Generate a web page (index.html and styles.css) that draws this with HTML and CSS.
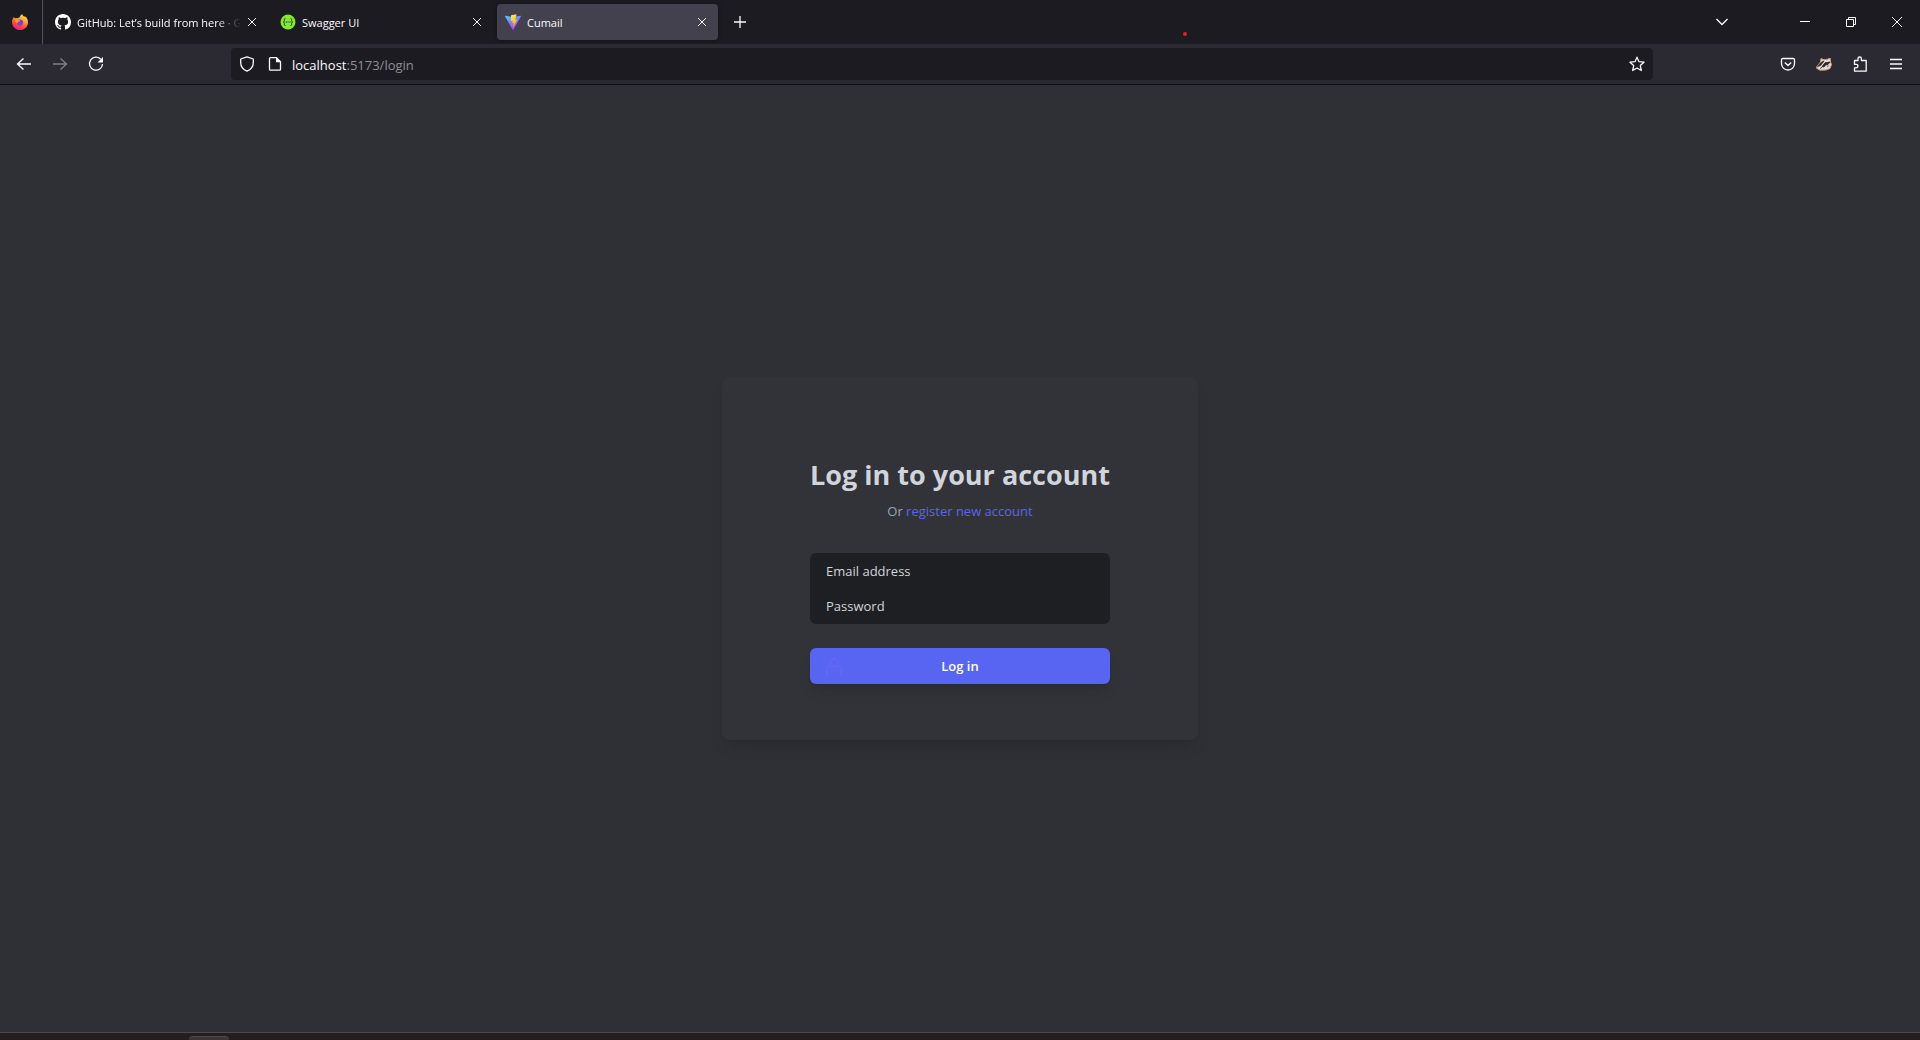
FILE: index.html
```html
<!DOCTYPE html>
<html lang="en">
<head>
<meta charset="utf-8">
<meta name="viewport" content="width=device-width, initial-scale=1">
<title>Cumail</title>
<link rel="stylesheet" href="styles.css">
</head>
<body>
<div class="screen">
  <header class="tabbar">
    <button class="firefox" aria-label="Firefox View">
      <svg width="16" height="16" viewBox="0 0 16 16">
        <defs>
          <linearGradient id="fx" x1="0.8" y1="0" x2="0.3" y2="1"><stop offset="0" stop-color="#fff04a"/><stop offset=".35" stop-color="#ffa82b"/><stop offset=".7" stop-color="#ff4a36"/><stop offset="1" stop-color="#f0118a"/></linearGradient>
        </defs>
        <path d="M10.2 0c.3 1.4 1.2 2 2.2 3 .2-.5.2-.8.2-1.100C15 3.200 16 5.700 16 8.200 16 12.600 12.500 16 8.100 16S0 12.600 0 8.200C0 6 .8 4.200 2 2.800c.2.700.5 1.200.9 1.500.8-.3 1.700-.3 2.400 0C6 3.700 6.900 3.500 7.500 3.500 8 2 9 .800 10.200 0z" fill="url(#fx)"/>
        <circle cx="8" cy="8.600" r="3.100" fill="#7a3fe0"/>
        <path d="M3.200 5.500c1.500-.6 3 .2 4.500.7 1 .4 0 1.300-1.200 1.500-.8.200-.9.900-.7 1.600C3.800 9.200 3 7.500 3.200 5.500z" fill="#ff9a1f"/>
      </svg>
    </button>
    <nav class="tabs" aria-label="Tabs">
      <div class="tab">
        <svg class="favicon" width="16" height="16" viewBox="0 0 16 16" fill="#fff"><path d="M8 0C3.580 0 0 3.580 0 8c0 3.540 2.290 6.530 5.470 7.590.4.070.55-.17.55-.38 0-.19-.01-.82-.01-1.490-2.010.37-2.530-.49-2.690-.94-.09-.23-.48-.94-.82-1.130-.28-.15-.68-.52-.01-.53.630-.01 1.080.58 1.230.82.720 1.210 1.870.87 2.330.66.070-.52.280-.87.510-1.070-1.780-.2-3.640-.89-3.640-3.950 0-.87.310-1.590.82-2.150-.08-.2-.36-1.020.08-2.120 0 0 .67-.21 2.200.82.640-.18 1.320-.27 2-.27s1.360.09 2 .27c1.530-1.040 2.200-.82 2.200-.82.440 1.100.160 1.920.080 2.120.510.560.820 1.270.820 2.150 0 3.070-1.870 3.750-3.650 3.950.290.250.540.730.540 1.480 0 1.070-.01 1.930-.01 2.200 0 .210.150.460.550.380A8.010 8.010 0 0 0 16 8c0-4.420-3.580-8-8-8z"/></svg>
        <span class="tab-title tab-title-faded">GitHub: Let’s build from here · G</span>
        <button class="tab-close" aria-label="Close tab"><svg width="10" height="10" viewBox="0 0 10 10"><path d="M1 1l8 8M9 1L1 9"/></svg></button>
      </div>
      <div class="tab">
        <svg class="favicon" width="16" height="16" viewBox="0 0 16 16"><circle cx="8" cy="8" r="7.500" fill="#85ea2d"/><g fill="none" stroke="#173647"><path d="M5.500 4.500c-1.500 0-1 1-1.100 2 0 .9-.4 1.500-1.100 1.500.7 0 1.100.6 1.100 1.500 0 1-.4 2 1.100 2M10.500 4.500c1.500 0 1 1 1.100 2 0 .9.4 1.500 1.100 1.500-.7 0-1.100.6-1.100 1.500 0 1 .4 2-1.100 2"/><path d="M5.700 8h4.800" stroke-dasharray="1.200 .6"/></g></svg>
        <span class="tab-title">Swagger UI</span>
        <button class="tab-close" aria-label="Close tab"><svg width="10" height="10" viewBox="0 0 10 10"><path d="M1 1l8 8M9 1L1 9"/></svg></button>
      </div>
      <div class="tab tab-active">
        <svg class="favicon" width="16" height="16" viewBox="0 0 16 16">
          <defs>
            <linearGradient id="va" x1="0" y1="0" x2=".6" y2="1"><stop offset="0" stop-color="#41d1ff"/><stop offset="1" stop-color="#bd34fe"/></linearGradient>
            <linearGradient id="vb" x1=".4" y1="0" x2=".6" y2="1"><stop offset="0" stop-color="#ffea83"/><stop offset=".2" stop-color="#ffdd35"/><stop offset="1" stop-color="#ffa800"/></linearGradient>
          </defs>
          <path d="M15.900 2.400L8.400 15.700c-.2.300-.6.300-.7 0L.1 2.400c-.2-.3.100-.7.500-.6L8 3.100l7.400-1.300c.4-.1.700.3.500.6z" fill="url(#va)"/>
          <path d="M11.600.2L6.100 1.300l-.3 5.800 1.900-.2-.4 2.400 1.500-.4-.7 4c0 .3.300.2.400 0l3.700-7.500-2 .3z" fill="url(#vb)"/>
        </svg>
        <span class="tab-title">Cumail</span>
        <button class="tab-close" aria-label="Close tab"><svg width="10" height="10" viewBox="0 0 10 10"><path d="M1 1l8 8M9 1L1 9"/></svg></button>
      </div>
      <button class="new-tab" aria-label="Open a new tab"><svg width="12" height="12" viewBox="0 0 12 12"><path d="M6 0v12M0 6h12" stroke="#fbfbfe" stroke-width="1.300"/></svg></button>
    </nav>
    <button class="all-tabs" aria-label="List all tabs"><svg width="14" height="10" viewBox="0 0 14 10"><path d="M1.500 2L7 7.500 12.500 2" stroke="#fbfbfe" stroke-width="1.300" fill="none"/></svg></button>
    <div class="window-buttons">
      <button aria-label="Minimize"><svg width="10" height="10" viewBox="0 0 10 10"><path d="M0 4.500h10"/></svg></button>
      <button aria-label="Restore"><svg width="10" height="10" viewBox="0 0 10 10"><path d="M.5 2.500h7v7h-7zM2.500 2.500v-2h7v7h-2"/></svg></button>
      <button aria-label="Close"><svg width="10" height="10" viewBox="0 0 10 10"><path d="M0 0l10 10M10 0L0 10"/></svg></button>
    </div>
    <span class="red-dot"></span>
  </header>

  <div class="toolbar">
    <button class="tool" aria-label="Back"><svg width="16" height="16" viewBox="0 0 16 16"><path d="M15 8H1.500M7.500 2.500L1.500 8l6 5.500"/></svg></button>
    <button class="tool" aria-label="Forward" disabled><svg width="16" height="16" viewBox="0 0 16 16"><path d="M1 8h13.500M8.500 2.500l6 5.500-6 5.500"/></svg></button>
    <button class="tool" aria-label="Reload"><svg width="16" height="16" viewBox="0 0 16 16"><path d="M12.800 3.300A6.500 6.500 0 1 0 14.500 8"/><path d="M15 1v5.500H9.500z" fill="#fbfbfe" stroke="none"/></svg></button>
    <div class="spring"></div>
    <div class="urlbar">
      <span class="site-icons">
        <svg width="16" height="16" viewBox="0 0 16 16"><path d="M8 .8L14.300 3v3.500c0 4-2.600 7.200-6.300 8.700C4.300 13.700 1.700 10.500 1.700 6.500V3z" stroke-linejoin="round"/></svg>
        <svg width="16" height="16" viewBox="0 0 16 16"><path d="M3.500 1.700h6l4 4v7.500a1 1 0 0 1-1 1h-9a1 1 0 0 1-1-1V2.700a1 1 0 0 1 1-1z"/><path d="M9 1l5.200 5.200H9z" fill="#fbfbfe" stroke="none"/></svg>
      </span>
      <span class="url">localhost<span class="url-dim">:5173/login</span></span>
      <svg width="16" height="16" viewBox="0 0 16 16"><path d="M8 1.200l2 4.500 5 .5-3.700 3.400 1 4.900L8 12l-4.300 2.500 1-4.900L1 6.200l5-.5z" stroke-linejoin="round"/></svg>
    </div>
    <div class="spring"></div>
    <button class="tool" aria-label="Save to Pocket"><svg width="16" height="16" viewBox="0 0 16 16"><path d="M2.700 2.500h10.600c.7 0 1.200.5 1.200 1.200V7.500a6.500 6.500 0 0 1-13 0V3.700c0-.7.500-1.200 1.200-1.200zM4.800 6.500L8 9.500l3.200-3" stroke-linejoin="round"/></svg></button>
    <button class="tool" aria-label="Privacy Badger"><svg width="16" height="16" viewBox="0 0 16 16"><path d="M.8 10.500L4.500 6 5 2.500l3 1.300 3.500-.6 2.700-1 .4 4 .9 2.300-1.500 4-4 1.500-6 .2-3.200-1.700z" fill="#dedcd8" stroke="#d9996c" stroke-width="1"/><path d="M1.500 10.500L5 6.500l3-1.500-3.500 4.500zM6 10.500l3-3.700 4.800-.8-1.800 2.500-2.500.5-1.500 2zM4 12.500l2-1.300M11 10.500l1.500-.7" fill="#292831" stroke="#292831" stroke-width=".8"/></svg></button>
    <button class="tool" aria-label="Extensions"><svg width="16" height="16" viewBox="0 0 16 16"><path d="M2.500 4.500H6V2.700a1.700 1.700 0 0 1 3.400 0v1.800h4.800v10.700H2.500v-3.400h1.800a1.700 1.700 0 0 0 0-3.400H2.500z" stroke-linejoin="round"/></svg></button>
    <button class="tool" aria-label="Application menu"><svg width="16" height="16" viewBox="0 0 16 16"><path d="M2 3.500h12M2 8h12M2 12.500h12"/></svg></button>
  </div>

  <main class="page">
    <section class="card">
      <h1>Log in to your account</h1>
      <p class="subtitle">Or <a href="#register">register new account</a></p>
      <form>
        <div class="fields">
          <input type="email" aria-label="Email address" placeholder="Email address">
          <input type="password" aria-label="Password" placeholder="Password">
        </div>
        <button class="submit" type="submit">
          <svg class="lock" width="20" height="20" viewBox="0 0 20 20"><path d="M3 20v-8.500c0-.6.400-1 1-1h12c.6 0 1 .4 1 1V20M6 10.500V7a4 4 0 0 1 8 0v3.500"/></svg>
          Log in
        </button>
      </form>
    </section>
  </main>
  <footer class="taskbar"><span class="task"></span></footer>
</div>
</body>
</html>
```
FILE: styles.css
```css
* { box-sizing: border-box; }
body {
  margin: 0;
  font-family: "Open Sans", "Noto Sans", sans-serif;
  background: #2f3035;
}
button {
  display: flex;
  align-items: center;
  justify-content: center;
  padding: 0;
  border: 0;
  background: none;
  color: inherit;
  font: inherit;
}
svg { flex: none; }
.screen { display: flex; flex-direction: column; min-height: 100vh; }

.tabbar {
  position: relative;
  display: flex;
  align-items: stretch;
  height: 44px;
  background: #1c1b22;
  color: #fbfbfe;
}
.firefox { width: 43px; padding-right: 3px; border-right: 1px solid #55545a; }
.tabs { display: flex; flex: 1; gap: 4px; padding: 4px; min-width: 0; }
.tab {
  display: flex;
  align-items: center;
  flex: 0 1 221px;
  min-width: 0;
  gap: 6px;
  padding: 0 11px 0 8px;
  border-radius: 4px;
}
.tab-active { background: #42414d; box-shadow: 0 0 4px rgba(0, 0, 0, .4); }
.tab-title {
  flex: 1;
  min-width: 0;
  overflow: hidden;
  padding-top: 1px;
  font-size: 11px;
  line-height: 16px;
  white-space: nowrap;
}
.tab-title-faded {
  mask-image: linear-gradient(to left, transparent, #000 24px);
}
.tab-close svg { stroke: #fbfbfe; fill: none; }
.new-tab { width: 36px; }
.all-tabs { width: 36px; margin-right: 42px; }
.window-buttons { display: flex; }
.window-buttons button { width: 46px; }
.window-buttons svg { stroke: #fff; fill: none; }
.red-dot {
  position: absolute;
  left: 1183px;
  top: 32px;
  width: 4px;
  height: 4px;
  border-radius: 2px;
  background: #ec1c24;
}

.toolbar {
  display: flex;
  align-items: center;
  height: 41px;
  padding: 0 6px;
  border-bottom: 1px solid #0c0c0d;
  background: #2b2a33;
  color: #fbfbfe;
}
.tool { width: 36px; height: 32px; }
.tool:disabled { opacity: .4; }
.toolbar svg { stroke: #fbfbfe; stroke-width: 1.3; fill: none; }
.spring { flex: 0 1 117px; }
.urlbar {
  display: flex;
  align-items: center;
  flex: 1;
  gap: 9px;
  height: 32px;
  padding: 0 8px;
  border-radius: 4px;
  background: #1c1b22;
}
.site-icons { display: flex; gap: 12px; }
.url { flex: 1; padding-top: 2px; font-size: 13px; line-height: 20px; }
.url-dim { color: #8f8f95; }

.page { display: flex; flex: 1; align-items: center; justify-content: center; }
.card {
  width: 476px;
  padding: 80px 88px 56px;
  border-radius: 8px;
  background: #323338;
  box-shadow: 0 10px 15px -3px rgba(0, 0, 0, .1), 0 4px 6px -4px rgba(0, 0, 0, .1);
}
h1 {
  margin: 0;
  color: #d1d5db;
  font-size: 27px;
  line-height: 36px;
  font-weight: 700;
  text-align: center;
  white-space: nowrap;
}
.subtitle {
  margin: 8px 0 32px;
  color: #9ca3af;
  font-size: 13px;
  line-height: 20px;
  text-align: center;
}
.subtitle a { color: #5865f2; text-decoration: none; }
.fields { overflow: hidden; border-radius: 6px; background: #1e1f22; }
.fields input {
  display: block;
  width: 100%;
  height: 36px;
  padding: 0 16px;
  border: 0;
  background: transparent;
  color: #d1d5db;
  font: inherit;
  font-size: 13px;
}
.fields input + input { margin-top: -1px; }
.fields input::placeholder { color: #d1d5db; opacity: 1; }
.submit {
  position: relative;
  width: 100%;
  height: 36px;
  margin-top: 24px;
  border-radius: 6px;
  background: #5865f2;
  box-shadow: 0 10px 15px -3px rgba(0, 0, 0, .1), 0 4px 6px -4px rgba(0, 0, 0, .1);
  color: #fff;
  font-size: 13px;
  font-weight: 600;
}
.lock {
  position: absolute;
  left: 14px;
  top: 8px;
  fill: none;
  stroke: #6366f1;
  stroke-width: 2;
}

.taskbar {
  height: 8px;
  padding: 3px 0 0 189px;
  border-top: 1px solid #4b4a4b;
  background: #231f20;
}
.task {
  display: block;
  width: 40px;
  height: 4px;
  border-top: 1px solid #4c494a;
  border-radius: 4px 4px 0 0;
  background: #3a3637;
}
```
